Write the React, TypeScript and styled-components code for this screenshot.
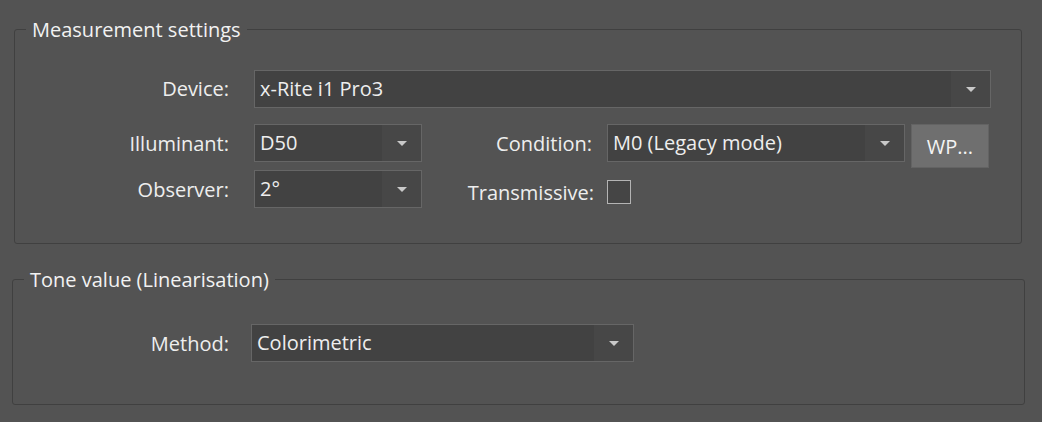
import React from 'react';
import styled, { createGlobalStyle } from 'styled-components';

const GlobalStyle = createGlobalStyle`
  html, body {
    margin: 0;
    padding: 0;
    background: #535353;
    font-family: "Open Sans", "Noto Sans", sans-serif;
    color: #eeeeee;
  }
`

const Page = styled.div`
  width: 1042px;
  height: 422px;
  overflow: hidden;
  padding-top: 16px;
  box-sizing: border-box;
`

const Group = styled.fieldset<{ $left: number; $width: number; $top: number; $pad: string }>`
  margin: ${p => p.$top}px 0 0 ${p => p.$left}px;
  width: ${p => p.$width}px;
  box-sizing: border-box;
  border: 1px solid #404040;
  border-radius: 3px;
  padding: ${p => p.$pad};
  min-width: 0;
`

const Title = styled.legend`
  margin-left: 11px;
  padding: 0 6px;
  font-size: 20px;
  line-height: 27px;
  color: #f2f2f2;
`

const Form = styled.div<{ $cols: string; $rows: string }>`
  display: grid;
  grid-template-columns: ${p => p.$cols};
  grid-template-rows: ${p => p.$rows};
  row-gap: 8px;
  align-items: center;
`

const Label = styled.div<{ $gap: number; $shift?: number; $top?: boolean }>`
  text-align: right;
  padding-right: ${p => p.$gap}px;
  font-size: 20px;
  line-height: ${p => (p.$top ? '38px' : 'normal')};
  align-self: ${p => (p.$top ? 'start' : 'center')};
  white-space: nowrap;
  margin-top: ${p => p.$shift ?? 0}px;
`

const ComboBox = styled.div<{ $span?: string }>`
  grid-column: ${p => p.$span ?? 'auto'};
  height: 38px;
  box-sizing: border-box;
  display: flex;
  align-items: stretch;
  background: #424242;
  border: 1px solid #666666;
  align-self: start;
`

const ComboText = styled.div`
  flex: 1;
  padding-left: 5px;
  font-size: 20px;
  line-height: 36px;
  white-space: nowrap;
  overflow: hidden;
`

const ArrowBox = styled.div`
  width: 39px;
  background: #474747;
  display: flex;
  align-items: center;
  justify-content: center;
`

const Arrow = styled.div`
  width: 0;
  height: 0;
  border-left: 5px solid transparent;
  border-right: 5px solid transparent;
  border-top: 5px solid #c9c9c9;
`

const Button = styled.div`
  width: 78px;
  height: 44px;
  margin-left: 6px;
  margin-bottom: -6px;
  box-sizing: border-box;
  background: #6f6f6f;
  border: 1px solid #636363;
  display: flex;
  align-items: center;
  justify-content: center;
  font-size: 20px;
  color: #f4f4f4;
  align-self: start;
`

const Check = styled.div<{ $shift: number }>`
  width: 24px;
  height: 24px;
  box-sizing: border-box;
  border: 1px solid #b4b4b4;
  background: #454545;
  margin-top: ${p => p.$shift}px;
`

const Combo: React.FC<{ value: string; span?: string }> = ({ value, span }) => (
  <ComboBox $span={span}>
    <ComboText>{value}</ComboText>
    <ArrowBox><Arrow /></ArrowBox>
  </ComboBox>
)

export default function App() {
  return (
    <Page>
      <GlobalStyle />
      <Group $left={14} $width={1008} $top={0} $pad="27px 0 35px 0">
        <Title>Measurement settings</Title>
        <Form $cols="239px 168px 185px 298px 86px" $rows="46px 38px 38px">
          <Label $gap={25} $top>Device:</Label>
          <Combo value="x-Rite i1 Pro3" span="2 / 6" />

          <Label $gap={25}>Illuminant:</Label>
          <Combo value="D50" />
          <Label $gap={15}>Condition:</Label>
          <Combo value="M0 (Legacy mode)" />
          <Button>WP...</Button>

          <Label $gap={25}>Observer:</Label>
          <Combo value="2°" />
          <Label $gap={13} $shift={6}>Transmissive:</Label>
          <Check $shift={6} />
        </Form>
      </Group>

      <Group $left={12} $width={1013} $top={22} $pad="31px 0 42px 0">
        <Title>Tone value (Linearisation)</Title>
        <Form $cols="238px 383px" $rows="38px">
          <Label $gap={22}>Method:</Label>
          <Combo value="Colorimetric" />
        </Form>
      </Group>
    </Page>
  );
}
